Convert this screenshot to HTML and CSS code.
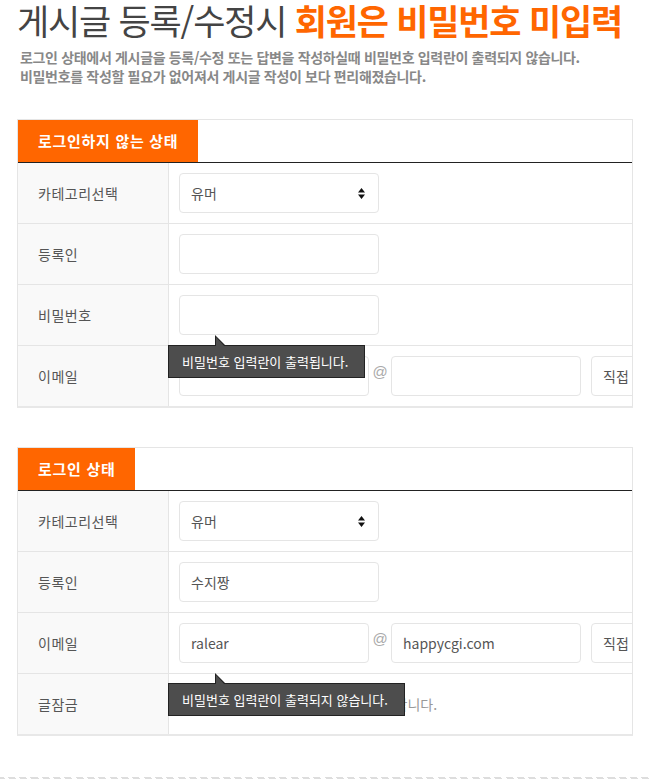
FILE: index.html
```html
<!DOCTYPE html>
<html lang="ko">
<head>
    <meta charset="UTF-8">
    <meta name="viewport" content="width=device-width, initial-scale=1.0">
    <title>게시글 등록/수정시 회원은 비밀번호 미입력</title>
    <link rel="stylesheet" href="styles.css">
</head>
<body>
    <div class="wrap">
        <h1 class="title">게시글 등록/수정시 <strong>회원은 비밀번호 미입력</strong></h1>
        <p class="desc">
            로그인 상태에서 게시글을 등록/수정 또는 답변을 작성하실때 비밀번호 입력란이 출력되지 않습니다.<br>
            비밀번호를 작성할 필요가 없어져서 게시글 작성이 보다 편리해졌습니다.
        </p>

        <!-- 비로그인 -->
        <div class="panel">
            <div class="panel-head"><h2 class="tab">로그인하지 않는 상태</h2></div>
            <div class="row">
                <div class="label">카테고리선택</div>
                <div class="field">
                    <div class="select">
                        <span>유머</span>
                        <svg width="7" height="11" viewBox="0 0 7 11"><path d="M0 4.5 L3.5 0 L7 4.5 Z M0 6.5 L7 6.5 L3.5 11 Z" fill="#111"/></svg>
                    </div>
                </div>
            </div>
            <div class="row">
                <div class="label">등록인</div>
                <div class="field"><input class="input" type="text"></div>
            </div>
            <div class="row">
                <div class="label">비밀번호</div>
                <div class="field">
                    <input class="input" type="password">
                    <div class="tip tip-near">비밀번호 입력란이 출력됩니다.</div>
                </div>
            </div>
            <div class="row">
                <div class="label">이메일</div>
                <div class="field email">
                    <input class="input input-mail" type="text">
                    <span class="at">@</span>
                    <input class="input input-mail" type="text">
                    <div class="input input-direct">직접</div>
                </div>
            </div>
        </div>

        <!-- 로그인 -->
        <div class="panel">
            <div class="panel-head"><h2 class="tab">로그인 상태</h2></div>
            <div class="row">
                <div class="label">카테고리선택</div>
                <div class="field">
                    <div class="select">
                        <span>유머</span>
                        <svg width="7" height="11" viewBox="0 0 7 11"><path d="M0 4.5 L3.5 0 L7 4.5 Z M0 6.5 L7 6.5 L3.5 11 Z" fill="#111"/></svg>
                    </div>
                </div>
            </div>
            <div class="row">
                <div class="label">등록인</div>
                <div class="field"><input class="input" type="text" value="수지짱"></div>
            </div>
            <div class="row">
                <div class="label">이메일</div>
                <div class="field email">
                    <input class="input input-mail" type="text" value="ralear">
                    <span class="at">@</span>
                    <input class="input input-mail" type="text" value="happycgi.com">
                    <div class="input input-direct">직접</div>
                    <div class="tip tip-far">비밀번호 입력란이 출력되지 않습니다.</div>
                </div>
            </div>
            <div class="row">
                <div class="label">글잠금</div>
                <div class="field">
                    <label class="lock"><input type="checkbox"> 게시글을 잠금상태로 설정합니다.</label>
                </div>
            </div>
        </div>
    </div>
    <div class="divider"></div>
</body>
</html>
```

FILE: styles.css
```css
body {
    margin: 0;
    padding: 0;
    background-color: #fff;
    font-family: "Noto Sans CJK KR", "Noto Sans", sans-serif;
    color: #555;
}
.wrap {
    padding: 0 17px;
}
.title {
    margin: 0;
    font-size: 35px;
    line-height: 40px;
    font-weight: normal;
    color: #444;
    letter-spacing: -1.2px;
    white-space: nowrap;
}
.title strong {
    color: #ff6600;
    font-weight: bold;
}
.desc {
    margin: 8px 0 0 3px;
    font-size: 14px;
    line-height: 19px;
    font-weight: bold;
    color: #888;
    letter-spacing: -0.33px;
}
.panel {
    width: 616px;
    box-sizing: border-box;
    margin-top: 33px;
    border: 1px solid #e5e5e5;
    border-bottom: 2px solid #e8e8e8;
    overflow: hidden;
}
.panel + .panel {
    margin-top: 39px;
}
.panel-head {
    border-bottom: 1px solid #222;
}
.tab {
    display: inline-block;
    margin: 0;
    padding: 0 20px;
    height: 42px;
    line-height: 42px;
    font-size: 15px;
    font-weight: bold;
    color: #fff;
    letter-spacing: 0.7px;
    background-color: #ff6600;
}
.row {
    display: grid;
    grid-template-columns: 151px 1fr;
    border-bottom: 1px solid #e5e5e5;
}
.row:last-child {
    border-bottom: none;
}
.label {
    box-sizing: border-box;
    padding-left: 20px;
    background-color: #f9f9f9;
    border-right: 1px solid #e5e5e5;
    font-size: 14px;
    letter-spacing: 0.5px;
    line-height: 60px;
    color: #555;
}
.field {
    position: relative;
    display: flex;
    align-items: center;
    padding: 10px;
    min-height: 40px;
}
.input, .select {
    box-sizing: border-box;
    width: 200px;
    height: 40px;
    margin: 0;
    padding: 0 11px;
    border: 1px solid #e5e5e5;
    border-radius: 4px;
    background: #fff;
    font-family: inherit;
    font-size: 14px;
    color: #555;
    outline: none;
}
.select {
    display: flex;
    align-items: center;
    justify-content: space-between;
    padding-right: 13px;
}
.input-mail {
    flex-shrink: 0;
    width: 190px;
}
.at {
    flex-shrink: 0;
    width: 22px;
    text-align: center;
    font-family: "Liberation Sans", Arial, sans-serif;
    font-size: 15px;
    color: #aaa;
    margin-top: -9px;
}
.input-direct {
    flex-shrink: 0;
    width: 100px;
    margin-left: 10px;
    display: flex;
    align-items: center;
}
.lock {
    display: flex;
    align-items: center;
    gap: 25px;
    font-size: 14px;
    color: #999;
    padding-left: 28px;
}
.lock input {
    margin: 0;
}
.tip {
    position: absolute;
    left: -1px;
    z-index: 2;
    height: 33px;
    box-sizing: border-box;
    padding: 0 16px 0 13px;
    border: 1px solid #222;
    background-color: #4d4d4d;
    color: #fff;
    font-size: 13px;
    line-height: 31px;
    white-space: nowrap;
}
.tip::before {
    content: "";
    position: absolute;
    left: 46px;
    top: -11px;
    border-bottom: 11px solid #222;
    border-right: 11px solid transparent;
}
.tip::after {
    content: "";
    position: absolute;
    left: 47px;
    top: -9px;
    border-bottom: 10px solid #4d4d4d;
    border-right: 9px solid transparent;
}
.tip-near {
    top: 60px;
}
.tip-far {
    top: 70px;
}
.divider {
    margin-top: 41px;
    height: 4px;
    background: repeating-linear-gradient(45deg, #ddd 0 5px, transparent 5px 8px);
}
```
